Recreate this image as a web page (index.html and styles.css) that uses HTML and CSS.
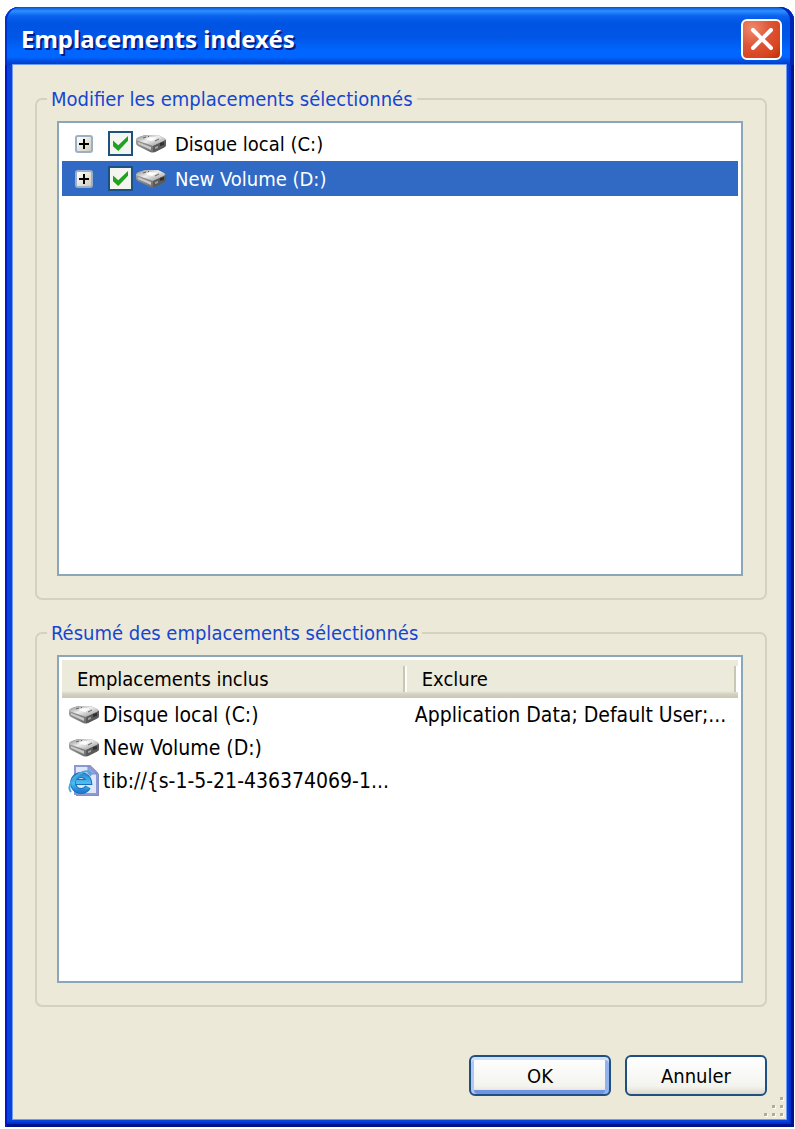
FILE: index.html
```html
<!DOCTYPE html>
<html lang="fr">
<head>
    <meta charset="UTF-8">
    <meta name="viewport" content="width=device-width, initial-scale=1.0">
    <title>Emplacements indexés</title>
    <link rel="stylesheet" href="styles.css">
</head>
<body>
    <!-- Icônes partagées -->
    <svg class="icon-defs" aria-hidden="true">
        <defs>
            <linearGradient id="driveTop" x1="0" y1="0" x2="1" y2="1">
                <stop offset="0" stop-color="#858585"/>
                <stop offset="0.45" stop-color="#ededed"/>
                <stop offset="1" stop-color="#8d8d8d"/>
            </linearGradient>
            <linearGradient id="driveFront" x1="0" y1="0" x2="1" y2="1">
                <stop offset="0" stop-color="#a8a8a8"/>
                <stop offset="1" stop-color="#5e5e5e"/>
            </linearGradient>
            <linearGradient id="ieBlue" x1="0" y1="0" x2="0" y2="1">
                <stop offset="0" stop-color="#2f8fd0"/>
                <stop offset="0.5" stop-color="#4cc0f2"/>
                <stop offset="1" stop-color="#1f7fd4"/>
            </linearGradient>
            <symbol id="drive" viewBox="0 0 32 20">
                <path d="M1 6 Q1 4 4 3 L10 1 H23 L29 4 Q31 5 31 7 V11 Q31 13 28 14 L20 18 Q18 19 15 18 L3 12 Q1 11 1 9 Z" fill="url(#driveFront)"/>
                <path d="M1 6 Q1 4 4 3 L10 1 H23 L29 4 Q31 5 29 7 L18 12 Z" fill="url(#driveTop)"/>
                <path d="M3 8 L16 13 V16 L3 10 Z" fill="#c9c9c9"/>
                <path d="M18 12 L31 6 V11 Q31 13 28 14 L20 18 L18 18 Z" fill="#5a5a5a"/>
                <path d="M20 13 L23 12 V14 L20 15 Z" fill="#a0a0a0"/>
                <path d="M25 9 L29 8 V11 L25 12 Z" fill="#303030"/>
                <path d="M10 5 L15 3 L22 4 L17 7 Z" fill="#fff" opacity="0.9"/>
                <path d="M8 4 L11 3 M13 3 L14 2 M20 7 L24 5" stroke="#666" stroke-width="1"/>
            </symbol>
            <symbol id="webpage" viewBox="0 0 32 32">
                <path d="M8 3 H25 L31 9 V31 H8 Z" fill="#858bc0"/>
                <path d="M7 1 H22 L29 8 V29 H7 Z" fill="#dfe6fa" stroke="#8b98d2" stroke-width="2"/>
                <path d="M20 1 V9 H29 Z" fill="#93a4dc" stroke="#7d8bc9" stroke-width="1"/>
                <path d="M20 22 A8 8 0 1 1 21 17 H8" fill="none" stroke="#1a6fb8" stroke-width="6"/>
                <path d="M20 22 A8 8 0 1 1 21 17 H8" fill="none" stroke="url(#ieBlue)" stroke-width="4"/>
                <path d="M3 27 C-2 21 6 11 15 7 C21 5 24 7 22 11" fill="none" stroke="#4aa9e4" stroke-width="2"/>
            </symbol>
        </defs>
    </svg>

    <div class="dialog">
        <div class="title-bar">
            <h1 class="title">Emplacements indexés</h1>
            <button class="close-button" type="button" aria-label="Fermer">
                <svg width="22" height="22" viewBox="0 0 22 22" aria-hidden="true">
                    <path d="M2 2 L20 20 M20 2 L2 20" stroke="#fff" stroke-width="4" stroke-linecap="round"/>
                </svg>
            </button>
        </div>

        <form class="content" action="javascript:void(0);">
            <fieldset class="group">
                <legend>Modifier les emplacements sélectionnés</legend>
                <ul class="list tree">
                    <li class="tree-row">
                        <button class="expander" type="button" aria-label="Développer Disque local (C:)"></button>
                        <input class="tree-check" type="checkbox" id="diskC" checked>
                        <label class="tree-label" for="diskC">
                            <svg class="drive-icon" aria-hidden="true"><use href="#drive"/></svg>
                            <span>Disque local (C:)</span>
                        </label>
                    </li>
                    <li class="tree-row selected">
                        <button class="expander" type="button" aria-label="Développer New Volume (D:)"></button>
                        <input class="tree-check" type="checkbox" id="diskD" checked>
                        <label class="tree-label" for="diskD">
                            <svg class="drive-icon" aria-hidden="true"><use href="#drive"/></svg>
                            <span>New Volume (D:)</span>
                        </label>
                    </li>
                </ul>
            </fieldset>

            <fieldset class="group">
                <legend>Résumé des emplacements sélectionnés</legend>
                <div class="list summary">
                    <table class="summary-table">
                        <thead>
                            <tr>
                                <th class="col-place">Emplacements inclus</th>
                                <th>Exclure</th>
                            </tr>
                        </thead>
                        <tbody>
                            <tr>
                                <td><div class="place"><svg class="drive-icon" aria-hidden="true"><use href="#drive"/></svg>Disque local (C:)</div></td>
                                <td>Application Data; Default User;...</td>
                            </tr>
                            <tr>
                                <td><div class="place"><svg class="drive-icon" aria-hidden="true"><use href="#drive"/></svg>New Volume (D:)</div></td>
                                <td></td>
                            </tr>
                            <tr>
                                <td><div class="place"><svg class="web-icon" aria-hidden="true"><use href="#webpage"/></svg>tib://{s-1-5-21-436374069-1...</div></td>
                                <td></td>
                            </tr>
                        </tbody>
                    </table>
                </div>
            </fieldset>

            <div class="actions">
                <button class="button button-default" type="submit">OK</button>
                <button class="button" type="button">Annuler</button>
            </div>

            <svg class="grip" width="20" height="20" viewBox="0 0 20 20" aria-hidden="true">
                <path d="M17 1h3v3h-3zM9 9h3v3h-3zM17 9h3v3h-3zM1 17h3v3h-3zM9 17h3v3h-3zM17 17h3v3h-3z" fill="#fff"/>
                <path d="M16 0h3v3h-3zM8 8h3v3h-3zM16 8h3v3h-3zM0 16h3v3h-3zM8 16h3v3h-3zM16 16h3v3h-3z" fill="#b0ac9a"/>
            </svg>
        </form>
    </div>
</body>
</html>
```

FILE: styles.css
```css
* {
    box-sizing: border-box;
}
body {
    margin: 0;
    padding: 7px 1px 2px 5px;
    background-color: #ffffff;
    color: #000000;
    font-family: Tahoma, "DejaVu Sans Condensed", "Noto Sans", sans-serif;
    font-size: 20px;
    line-height: 24px;
}
.icon-defs {
    position: absolute;
    width: 0;
    height: 0;
}
.dialog {
    padding: 0 8px 8px;
    border-radius: 14px 14px 0 0;
    background-color: #0842dc;
    box-shadow: inset 2px 0 #0019c4, inset -3px -3px #00118c, inset -5px -5px #0030d0;
}

/* Barre de titre */
.title-bar {
    display: flex;
    align-items: center;
    justify-content: space-between;
    height: 58px;
    margin: 0 -8px;
    padding: 6px 12px 0 16px;
    border-radius: 14px 14px 0 0;
    background: linear-gradient(#0350d8 0, #2b90ff 4px, #0a62ee 9px, #0054e3 16px, #0056e6 30px, #0066ff 44px, #0066ff 50px, #0048d8 55px, #0038c0 58px);
    box-shadow: inset 2px 0 #0030d0, inset -4px 0 #0024b8;
}
.title {
    margin: 0;
    color: #ffffff;
    font-family: "Trebuchet MS", "Noto Sans", sans-serif;
    font-size: 24px;
    line-height: 28px;
    text-shadow: 2px 2px #0a1883;
}
.close-button {
    display: flex;
    align-items: center;
    justify-content: center;
    width: 41px;
    height: 41px;
    padding: 0;
    border: 2px solid #ffffff;
    border-radius: 6px;
    background: radial-gradient(circle at 25% 20%, #ee8a6c 0, #de5436 45%, #d84420 75%, #b93004 100%);
}

/* Contenu */
.content {
    position: relative;
    padding: 22px 19px 23px 22px;
    background-color: #ece9d8;
    box-shadow: 0 0 0 1px #6f9bf0;
}
.group {
    min-width: 0;
    margin: 0 0 21px;
    padding: 10px 22px 22px 20px;
    border: 2px solid #d3d2bf;
    border-radius: 7px;
}
.group legend {
    margin-left: -10px;
    padding: 0 4px;
    color: #1446d0;
}
.list {
    margin: 0;
    padding: 3px;
    border: 2px solid #8ba5b9;
    background-color: #ffffff;
}
.tree {
    height: 455px;
    list-style: none;
}
.summary {
    height: 328px;
}
.drive-icon {
    flex: none;
    width: 32px;
    height: 20px;
}
.web-icon {
    flex: none;
    width: 32px;
    height: 32px;
}

/* Arborescence */
.tree-row {
    display: flex;
    align-items: center;
    height: 35px;
    padding-left: 13px;
}
.tree-row.selected {
    background-color: #316ac5;
    color: #ffffff;
}
.expander {
    position: relative;
    width: 18px;
    height: 18px;
    padding: 0;
    border: 2px solid #9bafc6;
    border-radius: 3px;
    background: linear-gradient(135deg, #ffffff, #d0cbbd);
}
.expander::before,
.expander::after {
    content: "";
    position: absolute;
    background-color: #000000;
}
.expander::before {
    top: 6px;
    left: 2px;
    width: 10px;
    height: 2px;
}
.expander::after {
    top: 2px;
    left: 6px;
    width: 2px;
    height: 10px;
}
.tree-check {
    appearance: none;
    width: 25px;
    height: 25px;
    margin: 0 2px 0 15px;
    border: 2px solid #1c5180;
    background-color: #f4f4f0;
}
.tree-check:checked::before {
    content: "";
    display: block;
    width: 15px;
    height: 15px;
    margin: 3px;
    background-color: #21a121;
    clip-path: polygon(0 30%, 35% 62%, 100% 0, 100% 32%, 35% 100%, 0 68%);
}
.tree-label {
    display: flex;
    align-items: center;
    gap: 8px;
}

/* Résumé */
.summary-table {
    width: 100%;
    table-layout: fixed;
    border-collapse: collapse;
}
.summary-table th {
    height: 38px;
    padding: 0 15px;
    background: linear-gradient(90deg, transparent calc(100% - 4px), #c9c6b4 calc(100% - 4px), #c9c6b4 calc(100% - 2px), #ffffff calc(100% - 2px)) center / 100% 26px no-repeat, linear-gradient(#ebeadb 31px, #d6d2c2 34px, #cbc7b8);
    font-weight: normal;
    text-align: left;
}
.summary-table .col-place {
    width: 51%;
}
.summary-table td {
    height: 33px;
    padding: 0 8px;
    font-size: 21px;
    white-space: nowrap;
}
.summary-table td:first-child {
    padding: 0 6px;
}
.place {
    display: flex;
    align-items: center;
    gap: 3px;
}

/* Boutons */
.actions {
    display: flex;
    justify-content: flex-end;
    gap: 14px;
    margin-top: 48px;
}
.button {
    width: 142px;
    height: 41px;
    padding: 0;
    border: 2px solid #1f5082;
    border-radius: 6px;
    background: linear-gradient(#ffffff, #f3f3ee 80%, #dcd7cb);
    color: #000000;
    font: inherit;
}
.button-default {
    box-shadow: inset 0 3px #cfe0fc, inset 3px 0 #b0c8f4, inset -4px 0 #94b3ee, inset 0 -4px #7093e2;
}
.grip {
    position: absolute;
    right: 2px;
    bottom: 2px;
}
```
